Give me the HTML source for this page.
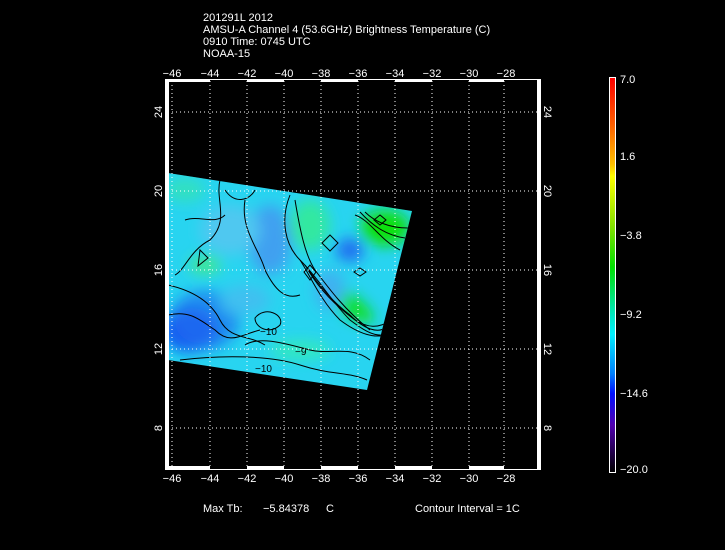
<!DOCTYPE html>
<html><head><style>
body{margin:0;background:#000;width:725px;height:550px;overflow:hidden}
svg{display:block}
text{font-family:"Liberation Sans",sans-serif;fill:#fff;font-size:11px}
</style></head><body>
<svg width="725" height="550" viewBox="0 0 725 550">
<defs>
<clipPath id="c"><polygon points="168,173 412,211 367,390 168,360"/></clipPath>
<filter id="b" x="-50%" y="-50%" width="200%" height="200%"><feGaussianBlur stdDeviation="7"/></filter>
<linearGradient id="cb" x1="0" y1="0" x2="0" y2="1">
<stop offset="0" stop-color="#ff0000"/><stop offset="0.12" stop-color="#ff6000"/><stop offset="0.22" stop-color="#ffc000"/><stop offset="0.25" stop-color="#ffff00"/><stop offset="0.38" stop-color="#80e000"/><stop offset="0.48" stop-color="#00e000"/><stop offset="0.6" stop-color="#00e8c0"/><stop offset="0.65" stop-color="#00f0ff"/><stop offset="0.75" stop-color="#0080ff"/><stop offset="0.8" stop-color="#0010ff"/><stop offset="0.88" stop-color="#5000b0"/><stop offset="1" stop-color="#000000"/>
</linearGradient>
</defs>
<text x="203" y="21">201291L 2012</text>
<text x="203" y="33">AMSU-A Channel 4 (53.6GHz) Brightness Temperature (C)</text>
<text x="203" y="45">0910 Time: 0745 UTC</text>
<text x="203" y="57">NOAA-15</text>
<g clip-path="url(#c)">
<rect x="160" y="165" width="260" height="230" fill="#28d4f0"/>
<g filter="url(#b)">
<ellipse cx="190" cy="330" rx="28" ry="22" fill="#1050f0"/>
<ellipse cx="205" cy="320" rx="35" ry="30" fill="#2070f0" opacity="0.7"/>
<ellipse cx="270" cy="240" rx="22" ry="35" fill="#40a0f0"/>
<ellipse cx="230" cy="230" rx="30" ry="25" fill="#50c8f0"/>
<ellipse cx="310" cy="225" rx="20" ry="25" fill="#30e8a0"/>
<ellipse cx="385" cy="228" rx="25" ry="18" fill="#10e010"/>
<ellipse cx="350" cy="305" rx="28" ry="10" fill="#10e020" transform="rotate(35 350 305)"/>
<ellipse cx="205" cy="265" rx="16" ry="9" fill="#40e890"/>
<ellipse cx="185" cy="190" rx="20" ry="12" fill="#30e0c0"/>
<ellipse cx="300" cy="350" rx="30" ry="10" fill="#30e8c0"/>
<ellipse cx="350" cy="250" rx="14" ry="12" fill="#2070f0"/>
<ellipse cx="245" cy="300" rx="25" ry="15" fill="#40c0f0"/>
<ellipse cx="330" cy="290" rx="15" ry="20" fill="#40b0f0"/>
</g>
<g fill="none" stroke="#000" stroke-width="1">
<path d="M168,285 C190,290 210,300 220,320 C230,340 250,335 265,345"/>
<path d="M168,315 C190,310 200,320 215,330 C230,345 240,335 260,330"/>
<path d="M245,200 C240,230 260,250 265,270 C275,290 285,300 300,295"/>
<path d="M290,195 C280,220 285,245 300,260 C320,280 330,300 350,320 C370,335 380,340 400,330"/>
<path d="M295,200 C300,230 305,255 315,270 C330,290 345,310 370,330"/>
<path d="M300,260 C310,275 320,300 340,320 C360,335 375,338 385,335"/>
<path d="M305,265 C315,280 330,300 350,315 C365,330 378,333 385,328"/>
<path d="M308,270 C320,290 335,305 355,320 C368,328 378,328 388,322"/>
<path d="M355,215 C370,220 380,240 400,250"/>
<path d="M360,212 C372,225 385,235 405,238"/>
<path d="M365,212 C375,222 390,228 408,228"/>
<path d="M180,360 C220,355 270,355 300,365 C330,375 350,372 367,380"/>
<path d="M220,180 C215,200 230,220 210,240 C190,250 185,270 175,275"/>
<path d="M245,345 C260,335 290,345 310,350 C330,355 350,345 370,360"/>
<path d="M185,220 C200,215 215,225 225,215"/>
<path d="M255,318 C265,305 285,315 280,325 C270,335 255,328 255,318 Z"/>
<path d="M225,190 C235,205 250,200 255,190"/>
<path d="M200,250 L208,258 L198,266 Z"/>
<path d="M330,235 L338,243 L330,251 L322,243 Z"/>
<path d="M310,265 L316,272 L310,280 L304,272 Z"/>
<path d="M360,268 L366,272 L360,276 L354,272 Z"/>
<path d="M380,215 L386,220 L380,225 L374,220 Z"/>
</g>
<text x="260" y="335" style="font-size:10px;fill:#000">−10</text>
<text x="255" y="372" style="font-size:10px;fill:#000">−10</text>
<text x="295" y="355" style="font-size:10px;fill:#000">−9</text>
</g>
<g stroke="#fff" stroke-width="1" stroke-dasharray="1,3" fill="none">
<path d="M172,81V467M210,81V467M247,81V467M284,81V467M321,81V467M358,81V467M395,81V467M432,81V467M469,81V467M504,81V467"/>
<path d="M168,112H538M168,191H538M168,270H538M168,349H538M168,428H538"/>
</g>
<rect x="165.5" y="79.5" width="375" height="390" fill="none" stroke="#fff"/>
<rect x="166" y="80" width="3" height="389" fill="#fff"/>
<rect x="537" y="80" width="3" height="389" fill="#fff"/>
<path d="M166,80.5H210M247,80.5H284M321,80.5H358M395,80.5H432M469,80.5H504M166,467.5H210M247,467.5H284M321,467.5H358M395,467.5H432M469,467.5H504" stroke="#fff" stroke-width="3"/>
<g text-anchor="middle">
<text x="172" y="77">−46</text><text x="210" y="77">−44</text><text x="247" y="77">−42</text><text x="284" y="77">−40</text><text x="321" y="77">−38</text><text x="358" y="77">−36</text><text x="395" y="77">−34</text><text x="432" y="77">−32</text><text x="469" y="77">−30</text><text x="506" y="77">−28</text>
<text x="172" y="482">−46</text><text x="210" y="482">−44</text><text x="247" y="482">−42</text><text x="284" y="482">−40</text><text x="321" y="482">−38</text><text x="358" y="482">−36</text><text x="395" y="482">−34</text><text x="432" y="482">−32</text><text x="469" y="482">−30</text><text x="506" y="482">−28</text>
<text transform="translate(162,112) rotate(-90)">24</text><text transform="translate(162,191) rotate(-90)">20</text><text transform="translate(162,270) rotate(-90)">16</text><text transform="translate(162,349) rotate(-90)">12</text><text transform="translate(162,428) rotate(-90)">8</text>
<text transform="translate(544,112) rotate(90)">24</text><text transform="translate(544,191) rotate(90)">20</text><text transform="translate(544,270) rotate(90)">16</text><text transform="translate(544,349) rotate(90)">12</text><text transform="translate(544,428) rotate(90)">8</text>
</g>
<rect x="609.5" y="77.5" width="6" height="395" fill="url(#cb)" stroke="#fff"/>
<text x="620" y="83">7.0</text><text x="620" y="160">1.6</text><text x="620" y="239">−3.8</text><text x="620" y="318">−9.2</text><text x="620" y="397">−14.6</text><text x="620" y="473">−20.0</text>
<text x="203" y="512">Max Tb:</text><text x="263" y="512">−5.84378</text><text x="326" y="512">C</text>
<text x="415" y="512">Contour Interval = 1C</text>
</svg>
</body></html>
